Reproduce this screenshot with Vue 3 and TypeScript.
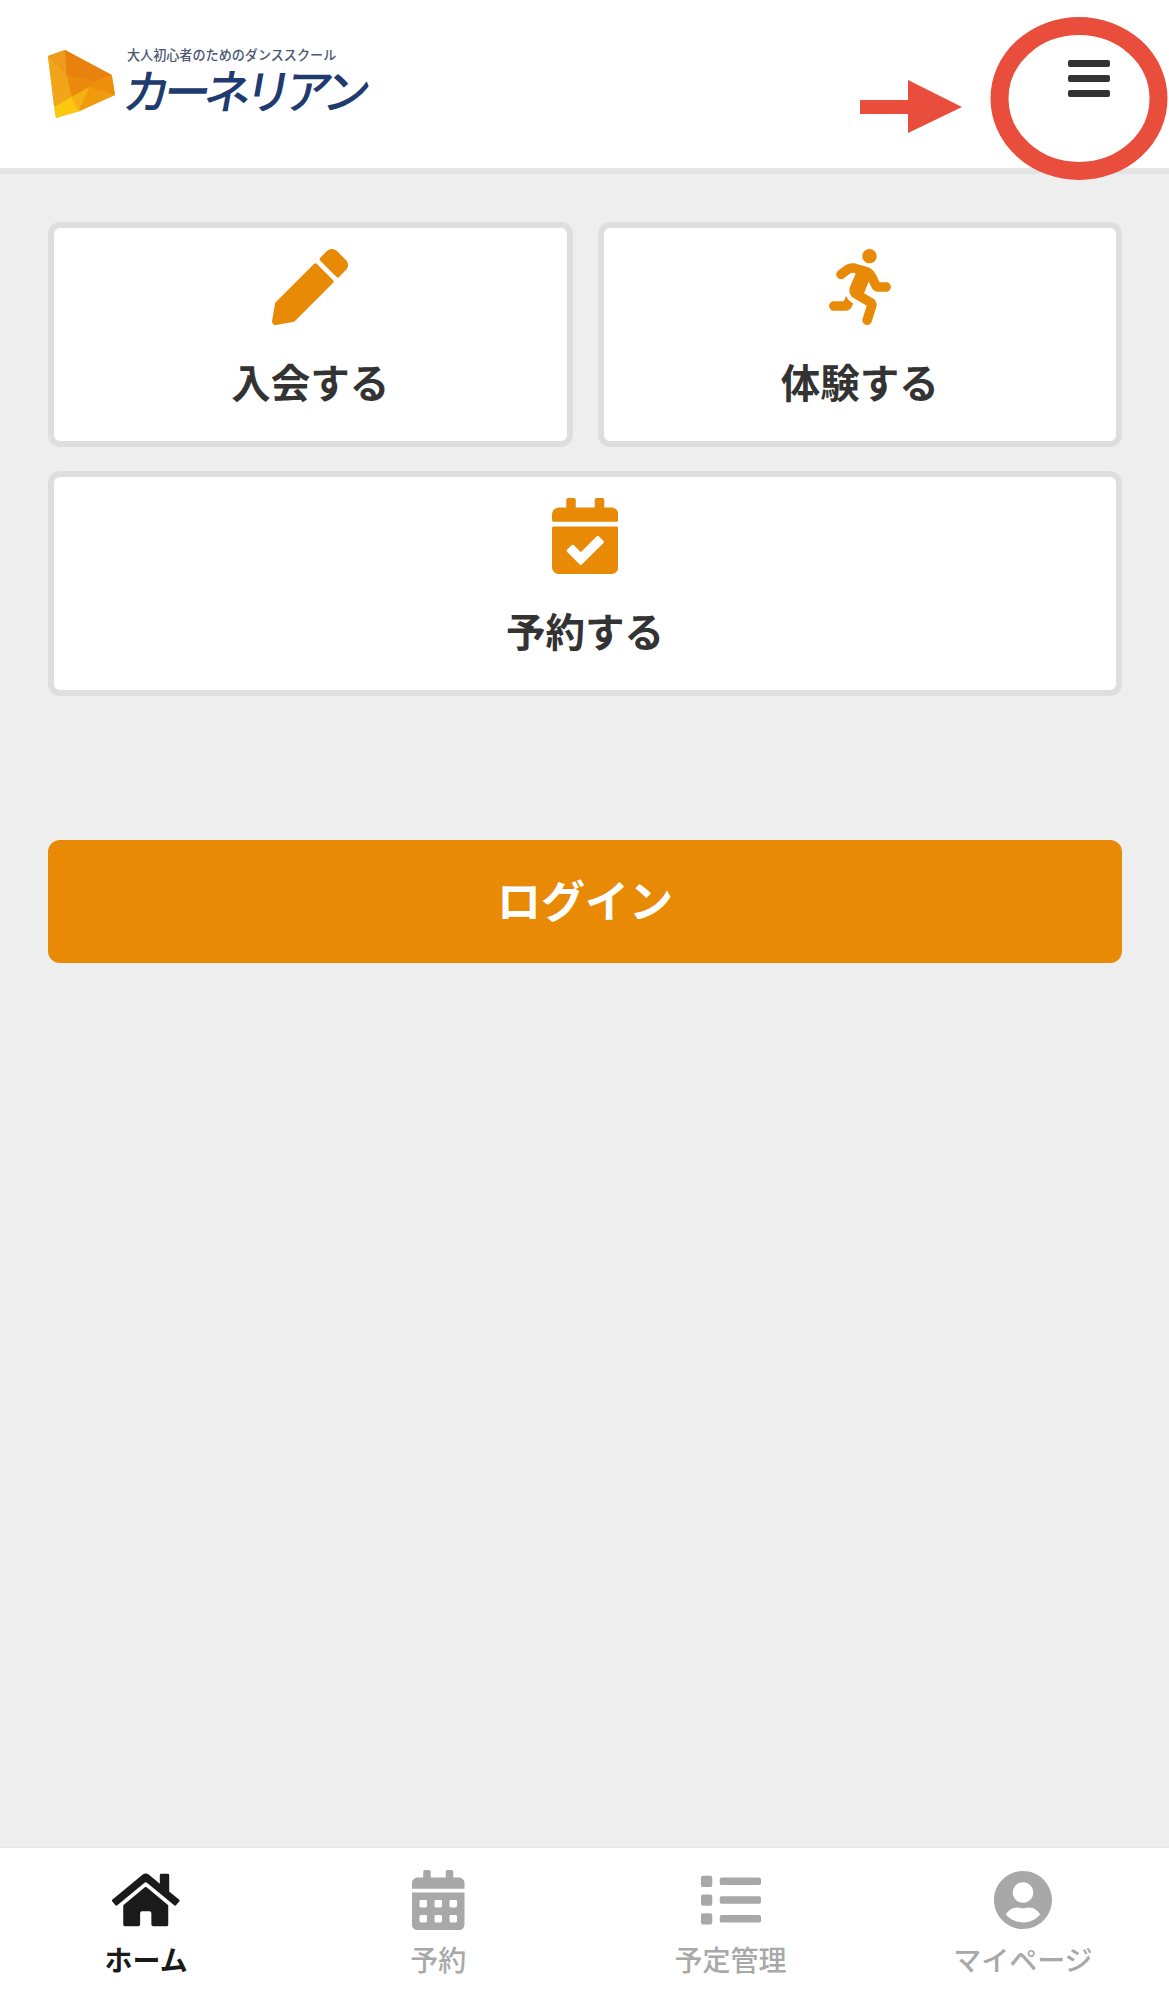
<script setup lang="ts">
interface NavItem { label: string; viewBox: string; width: number; path: string; active?: boolean }
const pencil = "M497.9 142.1l-46.1 46.1c-4.7 4.7-12.3 4.7-17 0l-111-111c-4.7-4.7-4.7-12.3 0-17l46.1-46.1c18.7-18.7 49.1-18.7 67.9 0l60.1 60.1c18.8 18.7 18.8 49.1 0 67.9zM284.2 99.8L21.6 362.4.4 483.9c-2.9 16.4 11.4 30.6 27.8 27.8l121.5-21.3 262.6-262.6c4.7-4.7 4.7-12.3 0-17l-111-111c-4.8-4.7-12.4-4.7-17.1 0z";
const running = "M272 96c26.51 0 48-21.49 48-48S298.51 0 272 0s-48 21.49-48 48 21.49 48 48 48zM113.69 317.47l-14.8 34.52H32c-17.67 0-32 14.33-32 32s14.33 32 32 32h77.45c19.25 0 36.58-11.44 44.11-29.09l8.79-20.52-10.67-6.3c-17.32-10.23-30.06-25.37-37.99-42.61zM384 223.99h-44.03l-26.06-53.25c-12.5-25.55-35.45-44.23-61.78-50.94l-71.08-21.14c-28.3-6.8-57.77-.55-80.84 17.14l-39.67 30.41c-14.03 10.75-16.69 30.83-5.92 44.86s30.84 16.66 44.86 5.92l39.69-30.41c7.67-5.89 17.44-8 25.27-6.14l14.7 4.37-37.46 87.39c-12.62 29.48-1.31 64.01 26.3 80.31l84.98 50.17-27.47 87.73c-5.28 16.86 4.11 34.81 20.97 40.09 3.19 1 6.41 1.48 9.58 1.48 13.61 0 26.23-8.77 30.52-22.45l31.64-101.06c5.91-20.77-2.89-43.08-21.64-54.39l-61.24-36.14 31.31-78.28 20.27 41.43c8 16.34 24.92 26.89 43.11 26.89H384c17.67 0 32-14.33 32-32s-14.33-31.99-32-31.99z";
const calendarCheck = "M436 160H12c-6.627 0-12-5.373-12-12v-36c0-26.51 21.49-48 48-48h48V12c0-6.627 5.373-12 12-12h40c6.627 0 12 5.373 12 12v52h128V12c0-6.627 5.373-12 12-12h40c6.627 0 12 5.373 12 12v52h48c26.51 0 48 21.49 48 48v36c0 6.627-5.373 12-12 12zM12 192h424c6.627 0 12 5.373 12 12v260c0 26.51-21.49 48-48 48H48c-26.51 0-48-21.49-48-48V204c0-6.627 5.373-12 12-12zm333.296 95.947l-28.169-28.398c-4.667-4.705-12.265-4.736-16.97-.068L194.12 364.665l-45.98-46.352c-4.667-4.705-12.266-4.736-16.971-.068l-28.397 28.17c-4.705 4.667-4.736 12.265-.068 16.97l82.601 83.269c4.667 4.705 12.265 4.736 16.97.068l142.953-141.805c4.705-4.667 4.736-12.265.068-16.97z";
const nav: NavItem[] = [
  { label: "ホーム", viewBox: "0 0 576 512", width: 67.5, active: true, path: "M280.37 148.26L96 300.11V464a16 16 0 0 0 16 16l112.06-.29a16 16 0 0 0 15.92-16V368a16 16 0 0 1 16-16h64a16 16 0 0 1 16 16v95.64a16 16 0 0 0 16 16.05L464 480a16 16 0 0 0 16-16V300L295.67 148.26a12.19 12.19 0 0 0-15.3 0zM571.6 251.47L488 182.56V44.05a12 12 0 0 0-12-12h-56a12 12 0 0 0-12 12v72.61L318.47 43a48 48 0 0 0-61 0L4.34 251.47a12 12 0 0 0-1.6 16.9l25.5 31A12 12 0 0 0 45.15 301l235.22-193.74a12.19 12.19 0 0 1 15.3 0L530.9 301a12 12 0 0 0 16.9-1.6l25.5-31a12 12 0 0 0-1.7-16.93z" },
  { label: "予約", viewBox: "0 0 448 512", width: 52.5, path: "M0 464c0 26.5 21.5 48 48 48h352c26.5 0 48-21.5 48-48V192H0v272zm320-196c0-6.6 5.4-12 12-12h40c6.6 0 12 5.4 12 12v40c0 6.6-5.4 12-12 12h-40c-6.6 0-12-5.4-12-12v-40zm0 128c0-6.6 5.4-12 12-12h40c6.6 0 12 5.4 12 12v40c0 6.6-5.4 12-12 12h-40c-6.6 0-12-5.4-12-12v-40zM192 268c0-6.6 5.4-12 12-12h40c6.6 0 12 5.4 12 12v40c0 6.6-5.4 12-12 12h-40c-6.6 0-12-5.4-12-12v-40zm0 128c0-6.6 5.4-12 12-12h40c6.6 0 12 5.4 12 12v40c0 6.6-5.4 12-12 12h-40c-6.6 0-12-5.4-12-12v-40zM64 268c0-6.6 5.4-12 12-12h40c6.6 0 12 5.4 12 12v40c0 6.6-5.4 12-12 12H76c-6.6 0-12-5.4-12-12v-40zm0 128c0-6.6 5.4-12 12-12h40c6.6 0 12 5.4 12 12v40c0 6.6-5.4 12-12 12H76c-6.6 0-12-5.4-12-12v-40zM400 64h-48V16c0-8.8-7.2-16-16-16h-32c-8.8 0-16 7.2-16 16v48H160V16c0-8.8-7.2-16-16-16h-32c-8.8 0-16 7.2-16 16v48H48C21.5 64 0 85.5 0 112v48h448v-48c0-26.5-21.5-48-48-48z" },
  { label: "予定管理", viewBox: "0 0 512 512", width: 60, path: "M80 368H16a16 16 0 0 0-16 16v64a16 16 0 0 0 16 16h64a16 16 0 0 0 16-16v-64a16 16 0 0 0-16-16zm0-320H16A16 16 0 0 0 0 64v64a16 16 0 0 0 16 16h64a16 16 0 0 0 16-16V64a16 16 0 0 0-16-16zm0 160H16a16 16 0 0 0-16 16v64a16 16 0 0 0 16 16h64a16 16 0 0 0 16-16v-64a16 16 0 0 0-16-16zm416 176H176a16 16 0 0 0-16 16v32a16 16 0 0 0 16 16h320a16 16 0 0 0 16-16v-32a16 16 0 0 0-16-16zm0-320H176a16 16 0 0 0-16 16v32a16 16 0 0 0 16 16h320a16 16 0 0 0 16-16V80a16 16 0 0 0-16-16zm0 160H176a16 16 0 0 0-16 16v32a16 16 0 0 0 16 16h320a16 16 0 0 0 16-16v-32a16 16 0 0 0-16-16z" },
  { label: "マイページ", viewBox: "0 0 496 512", width: 58, path: "M248 8C111 8 0 119 0 256s111 248 248 248 248-111 248-248S385 8 248 8zm0 96c48.6 0 88 39.4 88 88s-39.4 88-88 88-88-39.4-88-88 39.4-88 88-88zm0 344c-58.7 0-111.3-26.6-146.5-68.2 18.8-35.4 55.6-59.8 98.5-59.8 2.4 0 4.8.4 7.1 1.1 13 4.2 26.6 6.9 40.9 6.9 14.3 0 28-2.7 40.9-6.9 2.3-.7 4.7-1.1 7.1-1.1 42.9 0 79.7 24.4 98.5 59.8C359.3 421.4 306.7 448 248 448z" },
];
</script>

<template>
  <div class="page">
    <header class="header">
      <div class="logo">
        <svg class="gem" viewBox="0 0 67 69" width="67" height="69" aria-hidden="true">
          <polygon points="0,6 17,0 63.7,25 67,45 8,68" fill="#ee9210" />
          <polygon points="0,6 17,0 18.7,25" fill="#f09a1a" />
          <polygon points="17,0 63.7,25 47,31.7 18.7,25" fill="#e8810e" />
          <polygon points="18.7,25 47,31.7 42,36.7 23.7,46.7" fill="#ec8a0e" />
          <polygon points="63.7,25 67,45 42,36.7 47,31.7" fill="#ee8f0c" />
          <polygon points="0,6 18.7,25 23.7,46.7 6,56.7" fill="#f2a41a" />
          <polygon points="23.7,46.7 42,36.7 30.3,61.7" fill="#f6b014" />
          <polygon points="42,36.7 67,45 30.3,61.7" fill="#f09a0e" />
          <polygon points="6,56.7 23.7,46.7 30.3,61.7 8,68" fill="#fbc80f" />
        </svg>
        <div class="logo-text">
          <span class="tagline">大人初心者のためのダンススクール</span>
          <span class="brand">カーネリアン</span>
        </div>
      </div>
      <div class="burger" aria-label="メニュー">
        <span></span><span></span><span></span>
      </div>
    </header>

    <main class="main">
      <div class="cards">
        <a class="card">
          <svg class="card-icon" viewBox="0 0 512 512" width="76" height="76"><path :d="pencil" /></svg>
          <span class="card-label">入会する</span>
        </a>
        <a class="card">
          <svg class="card-icon" viewBox="0 0 416 512" width="62" height="76"><path :d="running" /></svg>
          <span class="card-label">体験する</span>
        </a>
        <a class="card wide">
          <svg class="card-icon" viewBox="0 0 448 512" width="66.5" height="76"><path :d="calendarCheck" /></svg>
          <span class="card-label">予約する</span>
        </a>
      </div>
      <button class="login" type="button">ログイン</button>
    </main>

    <footer class="tabbar">
      <a v-for="item in nav" :key="item.label" class="tab" :class="{ active: item.active }">
        <span class="tab-icon">
          <svg :viewBox="item.viewBox" :width="item.width" height="60"><path :d="item.path" /></svg>
        </span>
        <span class="tab-label">{{ item.label }}</span>
      </a>
    </footer>

    <svg class="callout" viewBox="0 0 1169 190" width="1169" height="190" aria-hidden="true">
      <path d="M860 100H908V80L962 107L908 133V114H860Z" fill="#e94e3c" />
      <ellipse cx="1079" cy="98.5" rx="79.5" ry="72.5" fill="none" stroke="#e94e3c" stroke-width="18" />
    </svg>
  </div>
</template>

<style scoped>
.page {
  position: relative;
  display: flex;
  flex-direction: column;
  min-height: 100vh;
  background: #eeeeee;
  font-family: "Noto Sans CJK JP", "Noto Sans", sans-serif;
  color: #333333;
}
.header {
  display: flex;
  align-items: center;
  justify-content: space-between;
  box-sizing: border-box;
  height: 174px;
  padding: 0 59px 14px 48px;
  background: #ffffff;
  border-bottom: 6px solid #e4e4e4;
}
.logo {
  display: flex;
  align-items: center;
  gap: 12px;
  margin-top: 8px;
}
.gem {
  flex: none;
  margin-top: 6px;
}
.logo-text {
  display: flex;
  flex-direction: column;
  width: 245px;
}
.tagline {
  font-size: 13.1px;
  line-height: 16px;
  font-weight: 500;
  color: #4a5876;
  white-space: nowrap;
}
.brand {
  margin-left: -7px;
  font-size: 47px;
  line-height: 52px;
  font-weight: 500;
  letter-spacing: -6.7px;
  color: #1f3b70;
  white-space: nowrap;
  transform: skewX(-10deg);
  transform-origin: left bottom;
}
.burger {
  display: flex;
  flex-direction: column;
  gap: 8px;
  width: 42px;
  margin-top: 2px;
}
.burger span {
  display: block;
  height: 7px;
  border-radius: 2px;
  background: #333333;
}
.main {
  flex: 1;
  padding: 48px 47px 0 48px;
}
.cards {
  display: grid;
  grid-template-columns: 1fr 1fr;
  gap: 24px 25px;
}
.card {
  display: flex;
  flex-direction: column;
  align-items: center;
  box-sizing: border-box;
  height: 225px;
  padding-top: 21px;
  background: #ffffff;
  border: 6px solid #dedede;
  border-radius: 12px;
}
.wide { grid-column: 1 / 3; }
.card-icon { flex: none; fill: #e88a06; }
.card-label {
  margin-top: 37px;
  font-size: 39.5px;
  line-height: 38px;
  font-weight: 700;
  color: #333333;
}
.login {
  display: block;
  width: 100%;
  height: 123px;
  margin-top: 144px;
  padding: 0 0 6px;
  border: 0;
  border-radius: 12px;
  background: #e88a06;
  color: #ffffff;
  font-family: inherit;
  font-size: 44px;
  font-weight: 700;
}
.tabbar {
  display: grid;
  grid-template-columns: repeat(4, 1fr);
  box-sizing: border-box;
  height: 155px;
  padding-top: 22px;
  background: #ffffff;
  box-shadow: 0 -1px 2px #e2e2e2;
}
.tab {
  display: flex;
  flex-direction: column;
  align-items: center;
  color: #a8a8a8;
  fill: #a8a8a8;
}
.tab.active {
  color: #1a1a1a;
  fill: #1a1a1a;
}
.tab-icon {
  display: flex;
  align-items: center;
  justify-content: center;
  height: 60px;
}
.tab-label {
  margin-top: 12px;
  font-size: 28px;
  line-height: 34px;
  font-weight: 500;
  white-space: nowrap;
}
.tab.active .tab-label { font-weight: 700; }
.callout {
  position: absolute;
  top: 0;
  left: 0;
  pointer-events: none;
}
</style>

<style>
html, body { margin: 0; padding: 0; }
</style>
